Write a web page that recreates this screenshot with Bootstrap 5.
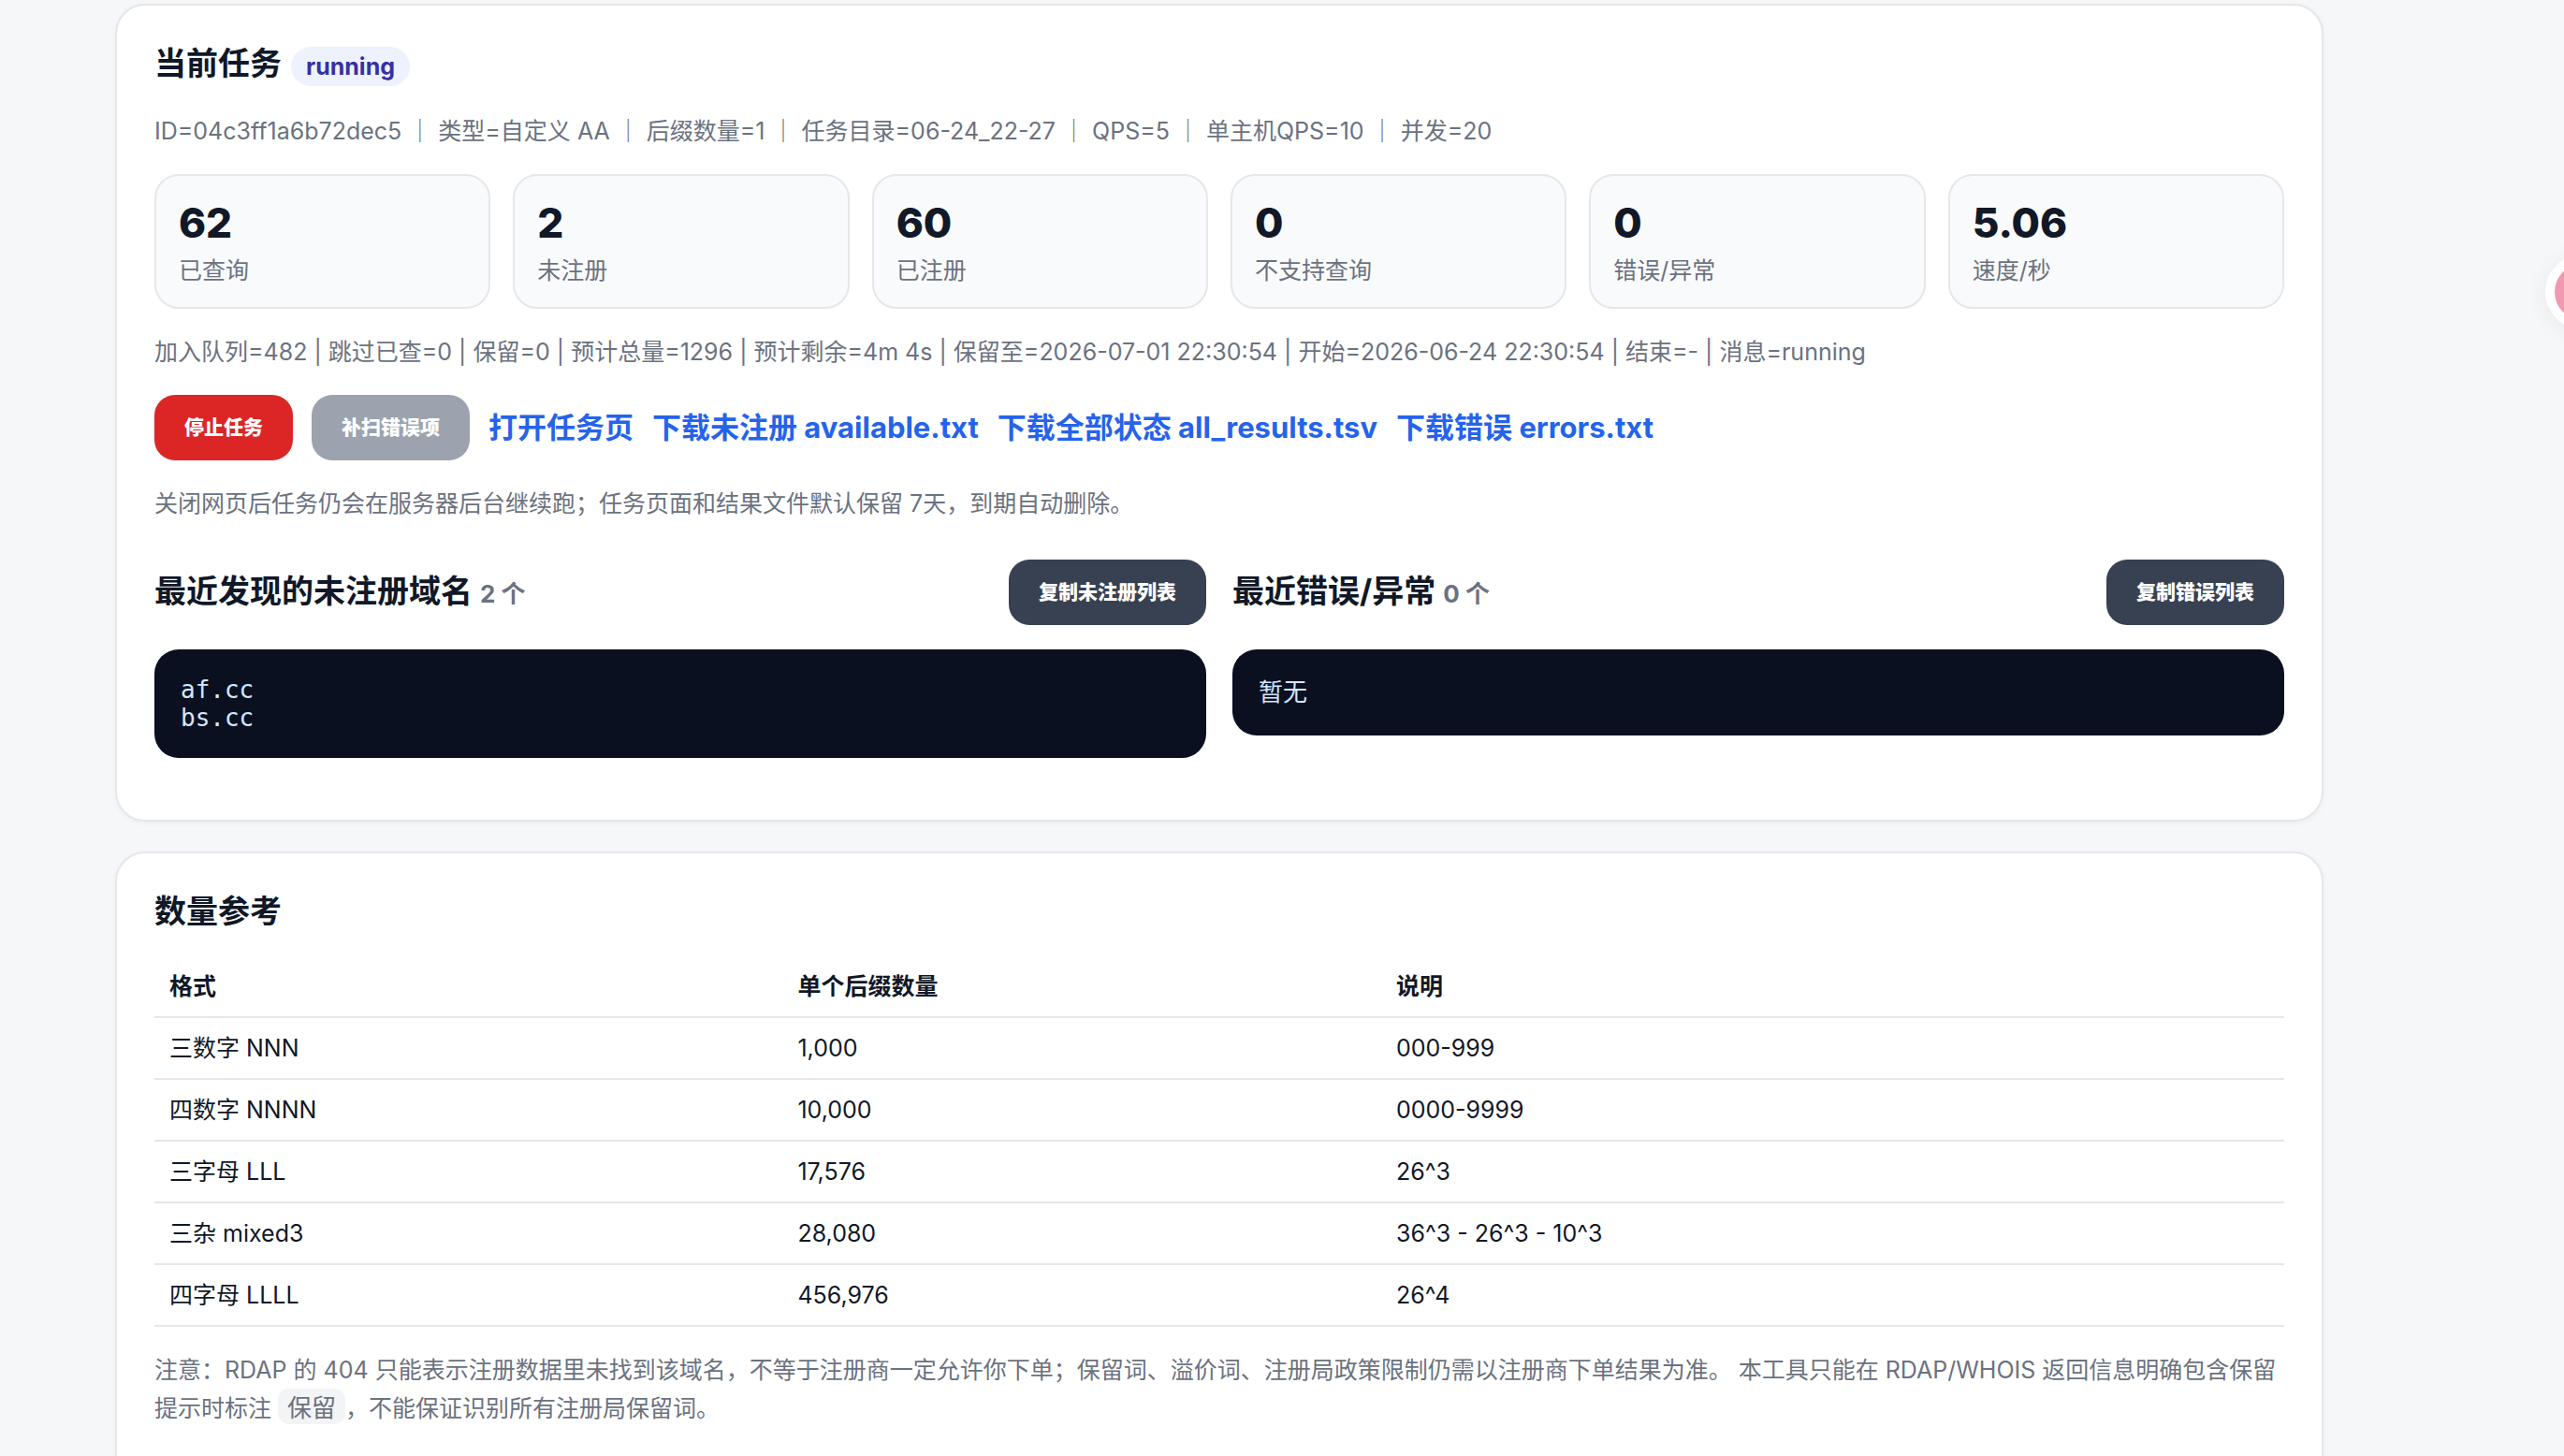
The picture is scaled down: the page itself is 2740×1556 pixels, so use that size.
<!DOCTYPE html>
<html lang="zh-CN">
<head>
<meta charset="utf-8">
<meta name="viewport" content="width=device-width, initial-scale=1">
<title>域名批量查询</title>
<link href="https://cdn.jsdelivr.net/npm/bootstrap@5.3.0/dist/css/bootstrap.min.css" rel="stylesheet">
<style>
  :root { --ink: #111827; --muted: #6b7280; --line: #e5e7eb; --gap: 26px; }
  body {
    background: #f6f7f9; color: var(--ink); overflow-x: hidden;
    font-family: Inter, "Noto Sans CJK SC", sans-serif; font-size: 25px; line-height: 40px;
  }
  .page-main { max-width: 2483px; padding: 4px 0 32px 123px; gap: 32px; }
  .panel {
    background: #fff; border: 2px solid var(--line); border-radius: 32px;
    padding: 40px 40px 66px; box-shadow: 0 2px 6px rgba(0, 0, 0, .04);
  }
  .panel h2 { font-size: 34px; line-height: 44px; font-weight: 700; margin: 0; }
  .panel p { margin: var(--gap) 0 0; color: var(--muted); }
  .panel .task-meta { margin-top: 28px; }
  .task-head { gap: 10px; }
  .state-pill { background: #eef2ff; color: #3730a3; font-size: 25px; line-height: 30px; font-weight: 700; padding: 6px 16px; }
  .stat-grid { gap: 24px; margin-top: var(--gap); }
  .stat-box { flex: 1 1 0; min-width: 0; background: #f9fafb; border: 2px solid var(--line); border-radius: 26px; padding: 24px; }
  .stat-num { font-size: 44px; line-height: 52px; font-weight: 800; }
  .stat-label { color: var(--muted); line-height: 30px; margin-top: 10px; }
  .action-row { gap: 20px; margin-top: var(--gap); }
  .action-row a { font-size: 31px; font-weight: 700; color: #2563eb; text-decoration: none; }
  .act { --bs-btn-disabled-opacity: 1; border: 0; border-radius: 22px; padding: 20px 32px; font-size: 21px; line-height: 30px; font-weight: 900; color: #fff; }
  .act-stop, .act-stop:hover { background: #dc2626; color: #fff; }
  .act-off:disabled { background: #9ca3af; color: #fff; }
  .act-dark, .act-dark:hover { background: #374151; color: #fff; }
  .result-grid { gap: 28px; margin-top: 40px; }
  .result-col { flex: 1 1 0; min-width: 0; }
  .result-col small { font-size: 26px; color: var(--muted); font-weight: 700; }
  .result-out {
    background: #0b1020; color: #d1e7ff; border-radius: 26px; padding: 28px; margin: var(--gap) 0 0;
    font: 26px/30px "DejaVu Sans Mono", "Noto Sans CJK SC", monospace;
  }
  .result-empty { line-height: 36px; }
  .ref-table { --bs-table-bg: transparent; --bs-table-color: var(--ink); margin: var(--gap) 0 0; border-color: var(--line); table-layout: fixed; color: var(--ink); }
  .ref-table th, .ref-table td { padding: 12px 16px; border-width: 0 0 2px; }
  .ref-table th { font-weight: 700; }
  .tag-code { display: inline-block; background: #f3f4f6; color: inherit; font: 26px/38px "Noto Sans CJK SC", sans-serif; border-radius: 12px; padding: 0 10px; }
  .float-ball {
    position: fixed; top: 272px; right: -60px; width: 80px; height: 80px; border-radius: 50%;
    border: 10px solid #fff; background: #f299b2; box-shadow: 0 4px 28px rgba(0, 0, 0, .06); padding: 0;
  }
</style>
<script defer src="https://cdn.jsdelivr.net/npm/bootstrap@5.3.0/dist/js/bootstrap.bundle.min.js"></script>
</head>
<body>
<main class="page-main d-flex flex-column">
  <section class="panel">
    <div class="task-head d-flex align-items-start">
      <h2>当前任务</h2>
      <span class="state-pill rounded-pill mt-1">running</span>
    </div>
    <p class="task-meta">ID=04c3ff1a6b72dec5 ｜ 类型=自定义 AA ｜ 后缀数量=1 ｜ 任务目录=06-24_22-27 ｜ QPS=5 ｜ 单主机QPS=10 ｜ 并发=20</p>
    <div class="stat-grid d-flex">
      <div class="stat-box"><div class="stat-num">62</div><div class="stat-label">已查询</div></div>
      <div class="stat-box"><div class="stat-num">2</div><div class="stat-label">未注册</div></div>
      <div class="stat-box"><div class="stat-num">60</div><div class="stat-label">已注册</div></div>
      <div class="stat-box"><div class="stat-num">0</div><div class="stat-label">不支持查询</div></div>
      <div class="stat-box"><div class="stat-num">0</div><div class="stat-label">错误/异常</div></div>
      <div class="stat-box"><div class="stat-num">5.06</div><div class="stat-label">速度/秒</div></div>
    </div>
    <p>加入队列=482 | 跳过已查=0 | 保留=0 | 预计总量=1296 | 预计剩余=4m 4s | 保留至=2026-07-01 22:30:54 | 开始=2026-06-24 22:30:54 | 结束=- | 消息=running</p>
    <div class="action-row d-flex flex-wrap align-items-center">
      <button type="button" class="btn act act-stop">停止任务</button>
      <button type="button" class="btn act act-off" disabled>补扫错误项</button>
      <a href="#task">打开任务页</a>
      <a href="#available">下载未注册 available.txt</a>
      <a href="#all">下载全部状态 all_results.tsv</a>
      <a href="#errors">下载错误 errors.txt</a>
    </div>
    <p>关闭网页后任务仍会在服务器后台继续跑；任务页面和结果文件默认保留 7天，到期自动删除。</p>
    <div class="result-grid d-flex align-items-start">
      <div class="result-col">
        <div class="d-flex align-items-center justify-content-between">
          <h2>最近发现的未注册域名 <small>2 个</small></h2>
          <button type="button" class="btn act act-dark">复制未注册列表</button>
        </div>
        <pre class="result-out">af.cc
bs.cc</pre>
      </div>
      <div class="result-col">
        <div class="d-flex align-items-center justify-content-between">
          <h2>最近错误/异常 <small>0 个</small></h2>
          <button type="button" class="btn act act-dark">复制错误列表</button>
        </div>
        <pre class="result-out result-empty">暂无</pre>
      </div>
    </div>
  </section>

  <section class="panel">
    <h2>数量参考</h2>
    <table class="table ref-table">
      <colgroup><col style="width:29.5%"><col style="width:28.1%"><col></colgroup>
      <thead><tr><th scope="col">格式</th><th scope="col">单个后缀数量</th><th scope="col">说明</th></tr></thead>
      <tbody>
        <tr><td>三数字 NNN</td><td>1,000</td><td>000-999</td></tr>
        <tr><td>四数字 NNNN</td><td>10,000</td><td>0000-9999</td></tr>
        <tr><td>三字母 LLL</td><td>17,576</td><td>26^3</td></tr>
        <tr><td>三杂 mixed3</td><td>28,080</td><td>36^3 - 26^3 - 10^3</td></tr>
        <tr><td>四字母 LLLL</td><td>456,976</td><td>26^4</td></tr>
      </tbody>
    </table>
    <p>注意：RDAP 的 404 只能表示注册数据里未找到该域名，不等于注册商一定允许你下单；保留词、溢价词、注册局政策限制仍需以注册商下单结果为准。 本工具只能在 RDAP/WHOIS 返回信息明确包含保留提示时标注 <code class="tag-code">保留</code>，不能保证识别所有注册局保留词。</p>
  </section>
</main>
<button type="button" class="float-ball" aria-label="悬浮助手"></button>
</body>
</html>
